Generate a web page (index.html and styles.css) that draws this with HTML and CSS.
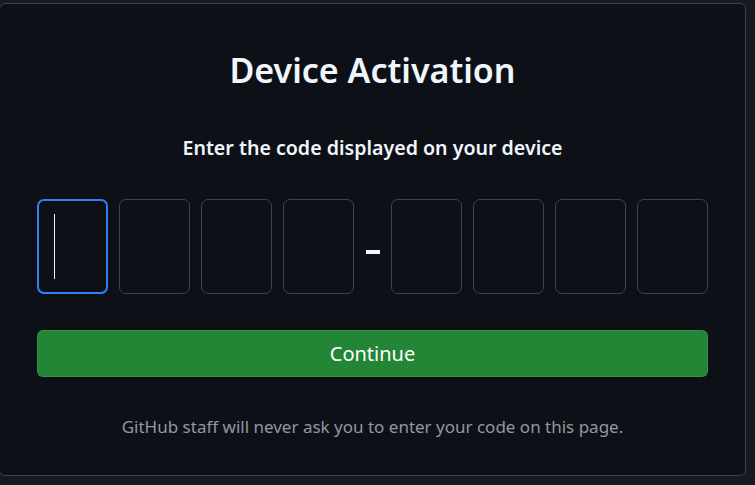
FILE: index.html
```html
<!DOCTYPE html>
<html lang="en">
<head>
<meta charset="utf-8">
<title>Device Activation</title>
<link rel="stylesheet" href="styles.css">
</head>
<body>
<main class="card">
  <h1 class="title">Device Activation</h1>
  <p class="subtitle">Enter the code displayed on your device</p>
  <div class="code">
    <div class="cell cell-active"><span class="caret"></span></div>
    <div class="cell"></div>
    <div class="cell"></div>
    <div class="cell"></div>
    <div class="dash"><span class="dash-bar"></span></div>
    <div class="cell"></div>
    <div class="cell"></div>
    <div class="cell"></div>
    <div class="cell"></div>
  </div>
  <button class="continue" type="button">Continue</button>
  <p class="note">GitHub staff will never ask you to enter your code on this page.</p>
</main>
</body>
</html>
```
FILE: styles.css
```css
html, body {
  margin: 0;
  padding: 0;
  background: #151b23;
  font-family: "Noto Sans", "Open Sans", sans-serif;
  color: #f0f6fc;
}

.card {
  box-sizing: border-box;
  width: 747px;
  height: 473px;
  margin: 3px 0 0 -1px;
  padding: 0 37px 0 37px;
  background: #0d1117;
  border: 1px solid #3d444d;
  border-radius: 6px;
  display: flex;
  flex-direction: column;
  align-items: stretch;
}

.title {
  margin: 42px 0 0;
  font-size: 34px;
  line-height: 48px;
  font-weight: 600;
  text-align: center;
  color: #f0f6fc;
}

.subtitle {
  margin: 40px 0 0;
  font-size: 19.6px;
  line-height: 28px;
  font-weight: 600;
  text-align: center;
  color: #f0f6fc;
}

.code {
  margin-top: 37px;
  display: flex;
  gap: 11px;
}

.cell {
  box-sizing: border-box;
  width: 71px;
  height: 95px;
  border: 1px solid #3d444d;
  border-radius: 7px;
  display: flex;
  align-items: center;
  padding-left: 17px;
}

.cell-active {
  border: 2px solid #2f81f7;
  padding-left: 15px;
}

.caret {
  display: block;
  width: 1px;
  height: 65px;
  background: #f0f6fc;
}

.dash {
  width: 15px;
  display: flex;
  align-items: center;
  justify-content: center;
}

.dash-bar {
  display: block;
  width: 14px;
  height: 4px;
  margin-top: 10px;
  background: #f0f6fc;
}

.continue {
  margin-top: 36px;
  height: 47px;
  border: 1px solid rgba(240, 246, 252, 0.1);
  border-radius: 6px;
  background: #238636;
  color: #ffffff;
  font-family: "Noto Sans", "Open Sans", sans-serif;
  font-size: 20px;
  font-weight: 400;
  padding: 0;
}

.note {
  margin: 38px 0 0;
  font-size: 17px;
  line-height: 24px;
  text-align: center;
  color: #9198a1;
}
```
